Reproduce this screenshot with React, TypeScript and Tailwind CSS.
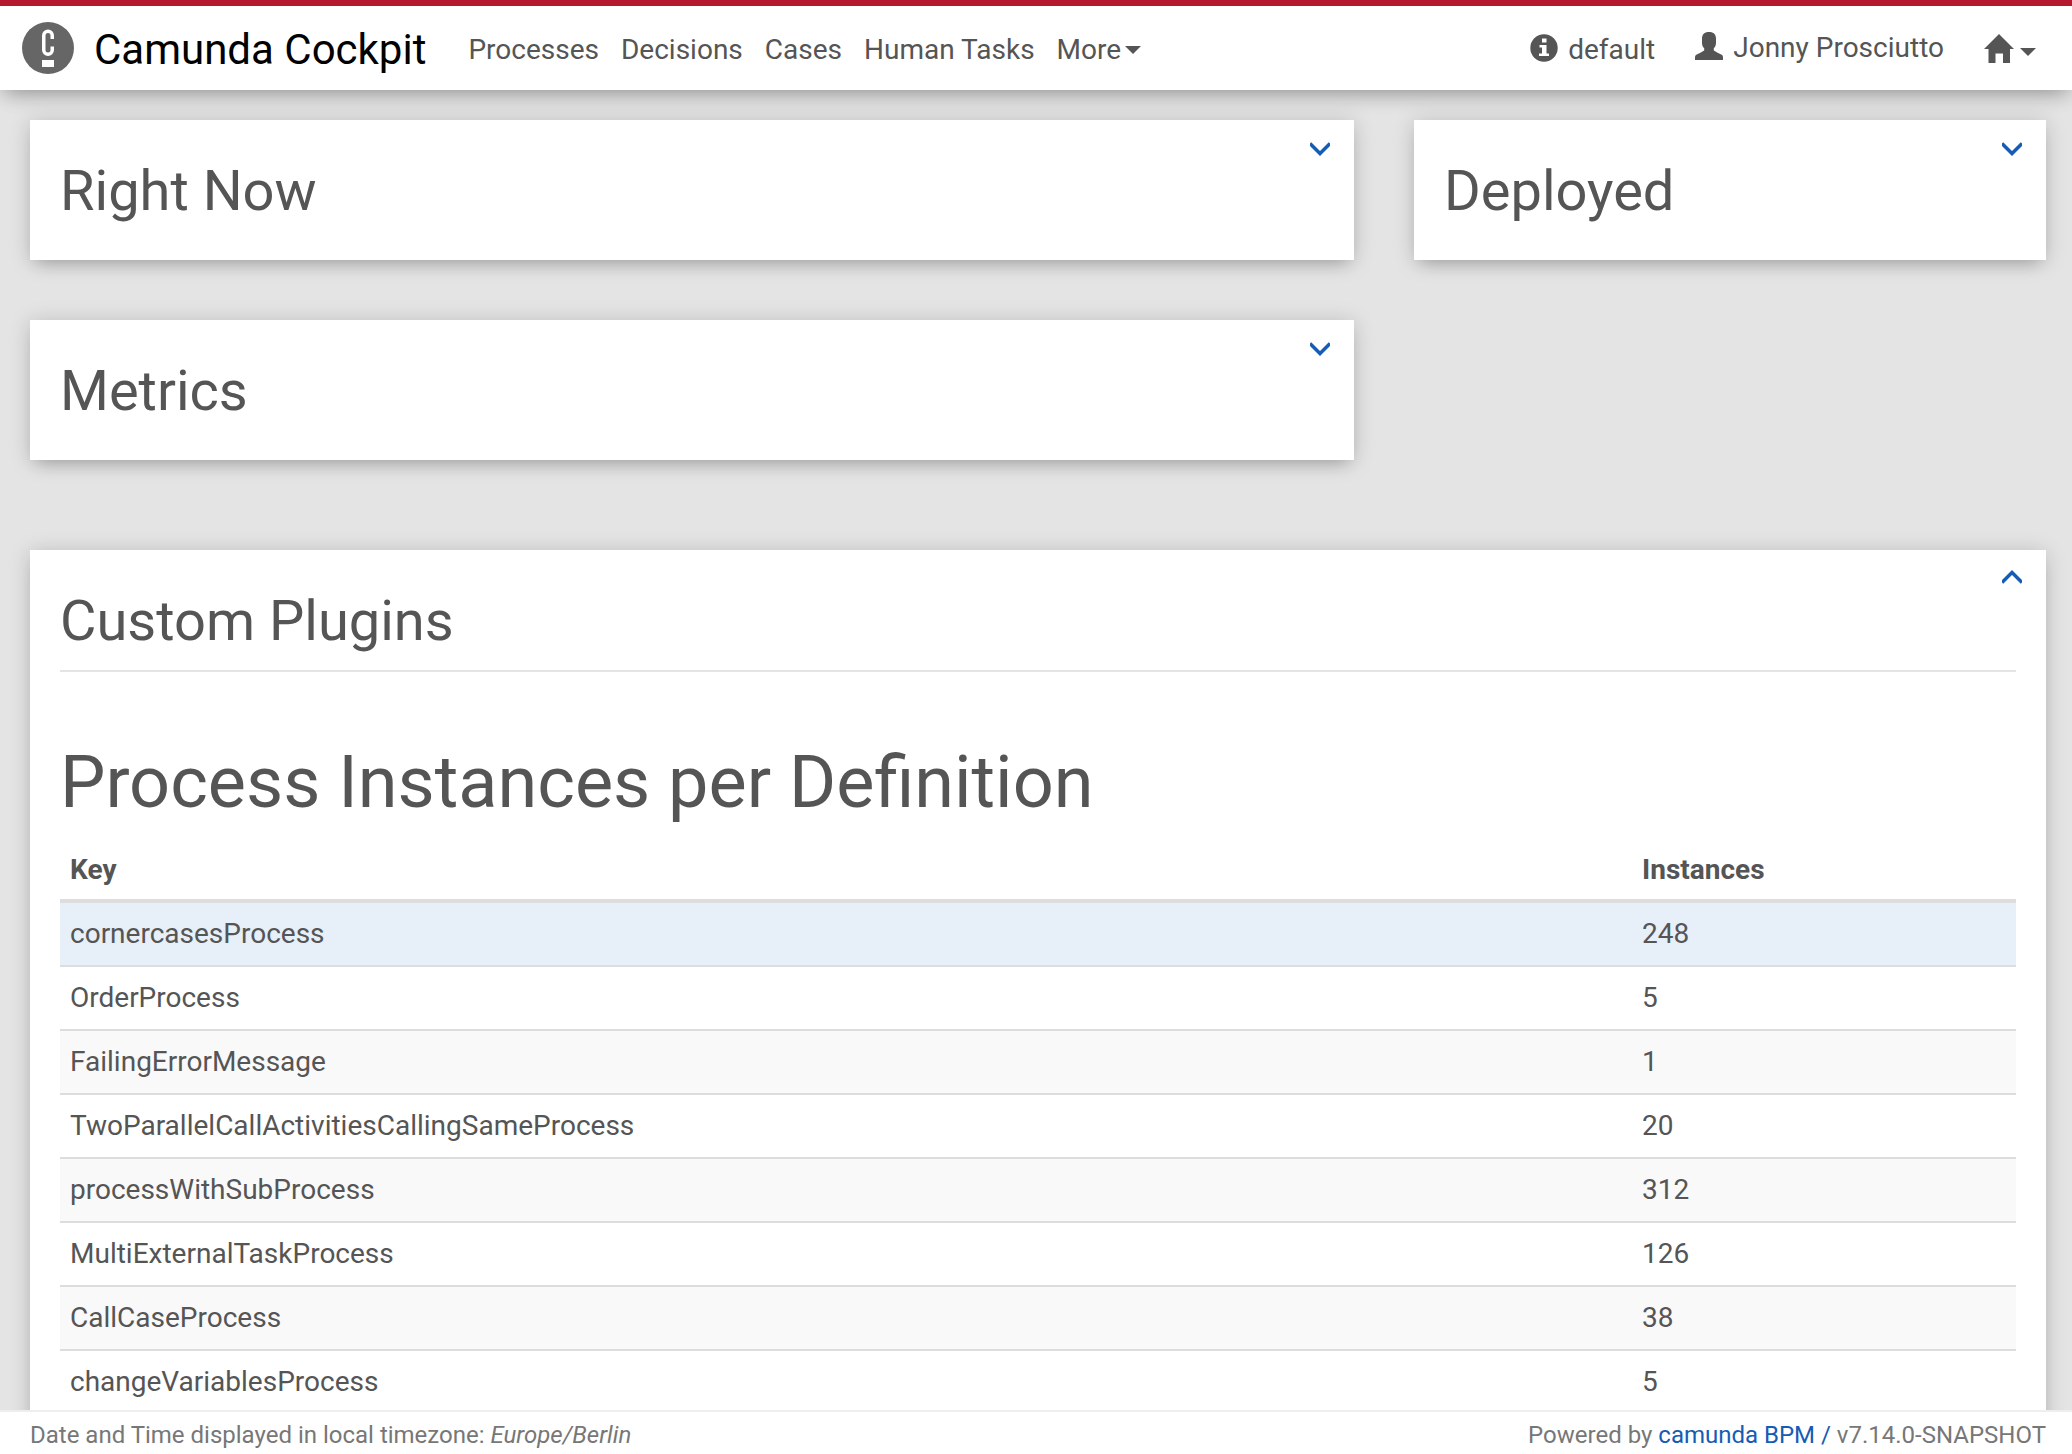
import { useState, type ReactNode } from "react";

const processes = [
  { key: "cornercasesProcess", instances: 248 },
  { key: "OrderProcess", instances: 5 },
  { key: "FailingErrorMessage", instances: 1 },
  { key: "TwoParallelCallActivitiesCallingSameProcess", instances: 20 },
  { key: "processWithSubProcess", instances: 312 },
  { key: "MultiExternalTaskProcess", instances: 126 },
  { key: "CallCaseProcess", instances: 38 },
  { key: "changeVariablesProcess", instances: 5 },
];

function Logo() {
  return (
    <svg className="size-[52px] shrink-0" viewBox="0 0 52 52" aria-hidden="true">
      <circle cx="26" cy="26" r="26" fill="#666666" />
      <path
        d="M30.250 17V13.500a4.250 4.250 0 0 0-8.500 0V28a4.250 4.250 0 0 0 8.500 0V24.500"
        fill="none"
        stroke="#ffffff"
        strokeWidth="3.500"
      />
      <rect x="20" y="38" width="12" height="7" fill="#ffffff" />
    </svg>
  );
}

function Caret() {
  return (
    <svg className="h-2 w-4" viewBox="0 0 16 8" fill="currentColor" aria-hidden="true">
      <path d="M0 0h16L8 8z" />
    </svg>
  );
}

function InfoIcon() {
  return (
    <svg className="size-7" viewBox="0 0 28 28" aria-hidden="true">
      <circle cx="14" cy="14" r="13.700" fill="currentColor" />
      <path d="M12 4.500h4.500v4H12zM9.500 11h7v8.500H19V22H9v-2.500h3v-6H9.500z" fill="#ffffff" />
    </svg>
  );
}

function UserIcon() {
  return (
    <svg className="size-7" viewBox="0 0 28 28" fill="currentColor" aria-hidden="true">
      <path d="M14 0c4.800 0 7 2.700 7 6.500v4c0 2.800-.8 4.500-2.200 5.700v2.300c2 1.500 5.400 2.800 7.900 4.300 1 .6 1.300 1.700 1.300 2.700V28H0v-2.500c0-1 .3-2.100 1.300-2.700 2.500-1.500 5.900-2.800 7.900-4.300v-2.300C7.800 15 7 13.300 7 10.500v-4C7 2.700 9.200 0 14 0z" />
    </svg>
  );
}

function HomeIcon() {
  return (
    <svg className="h-[29px] w-[30px]" viewBox="0 0 30 29" fill="currentColor" aria-hidden="true">
      <path d="M15 0l15 15h-4v14h-7v-9.500h-7.500V29H4.500V15H0z" />
    </svg>
  );
}

type CardProps = { title: string; open?: boolean; className?: string; children?: ReactNode };

function Card({ title, open = false, className = "", children }: CardProps) {
  const [expanded, setExpanded] = useState(open);
  return (
    <section
      className={`relative bg-white px-[30px] pt-8 pb-[30px] shadow-[0_2px_20px_rgba(0,0,0,0.18),0_10px_16px_-8px_rgba(0,0,0,0.2)] ${className}`}
    >
      <h2
        className={`text-[56px] leading-[78px] ${expanded ? "border-b-2 border-[#e4e4e4] pb-2.5" : ""}`}
      >
        {title}
      </h2>
      <button
        type="button"
        aria-label={`Toggle ${title}`}
        aria-expanded={expanded}
        onClick={() => setExpanded(!expanded)}
        className={`absolute right-6 text-[#155cb5] ${expanded ? "top-5" : "top-[22px]"}`}
      >
        <svg
          className={`h-3.5 w-5 ${expanded ? "rotate-180" : ""}`}
          viewBox="0 0 20 14"
          fill="none"
          stroke="currentColor"
          strokeWidth="3.500"
          aria-hidden="true"
        >
          <path d="M0 1.500l10 10 10-10" />
        </svg>
      </button>
      {expanded && children}
    </section>
  );
}

export default function App() {
  return (
    <div className="flex h-screen flex-col bg-[#e4e4e4] font-[Roboto,sans-serif] text-[28px] leading-10 text-[#555555]">
      <header className="relative z-10 flex h-[90px] shrink-0 items-center border-t-[6px] border-[#b5192d] bg-white pr-9 pl-[22px] shadow-[0_2px_20px_rgba(0,0,0,0.18),0_10px_20px_-8px_rgba(0,0,0,0.25)]">
        <a href="#" className="flex items-center gap-5 text-[42px] text-black">
          <Logo />
          <span className="pt-1">Camunda Cockpit</span>
        </a>
        <nav className="ml-[42px] flex items-center gap-[22px] pt-1">
          <a href="#processes">Processes</a>
          <a href="#decisions">Decisions</a>
          <a href="#cases">Cases</a>
          <a href="#tasks">Human Tasks</a>
          <button type="button" className="flex items-center gap-1">
            More
            <Caret />
          </button>
        </nav>
        <div className="ml-auto flex items-center">
          <a href="#engine" className="flex items-center gap-2.5">
            <InfoIcon />
            <span className="pt-1">default</span>
          </a>
          <button type="button" className="ml-10 flex items-center gap-2.5">
            <span className="pb-1">
              <UserIcon />
            </span>
            Jonny Prosciutto
          </button>
          <button type="button" aria-label="Apps" className="ml-10 flex items-center gap-1.5">
            <HomeIcon />
            <span className="flex pt-2">
              <Caret />
            </span>
          </button>
        </div>
      </header>

      <main className="min-h-0 flex-1 overflow-hidden pt-[30px] pr-[26px] pl-[30px]">
        <div className="grid grid-cols-[1324fr_632fr] items-start gap-[60px]">
          <Card title="Right Now" />
          <Card title="Deployed" />
          <Card title="Metrics" />
        </div>

        <Card title="Custom Plugins" open className="mt-[90px]">
          <h1 className="mt-[71px] mb-4 text-[72px] leading-[80px]">Process Instances per Definition</h1>
          <table className="w-full table-fixed border-collapse text-left">
            <thead>
              <tr className="border-b-4 border-[#dddddd]">
                <th className="px-2.5 pt-[11px] pb-[9px] font-bold">Key</th>
                <th className="w-96 px-2.5 pt-[11px] pb-[9px] font-bold">Instances</th>
              </tr>
            </thead>
            <tbody>
              {processes.map((p, i) => (
                <tr
                  key={p.key}
                  className={`border-b-2 border-[#dddddd] ${i === 0 ? "bg-[#e7eff8]" : "odd:bg-[#f9f9f9]"}`}
                >
                  <td className="px-2.5 py-[11px]">{p.key}</td>
                  <td className="px-2.5 py-[11px]">{p.instances}</td>
                </tr>
              ))}
            </tbody>
          </table>
        </Card>
      </main>

      <footer className="relative z-10 flex h-11 shrink-0 items-center justify-between border-t-2 border-[#eeeeee] bg-white pt-1 pr-[26px] pl-[30px] text-2xl text-[#777777]">
        <p>
          Date and Time displayed in local timezone: <em>Europe/Berlin</em>
        </p>
        <p>
          Powered by{" "}
          <a href="#camunda" className="text-[#155cb5]">
            camunda BPM /
          </a>{" "}
          v7.14.0-SNAPSHOT
        </p>
      </footer>
    </div>
  );
}
